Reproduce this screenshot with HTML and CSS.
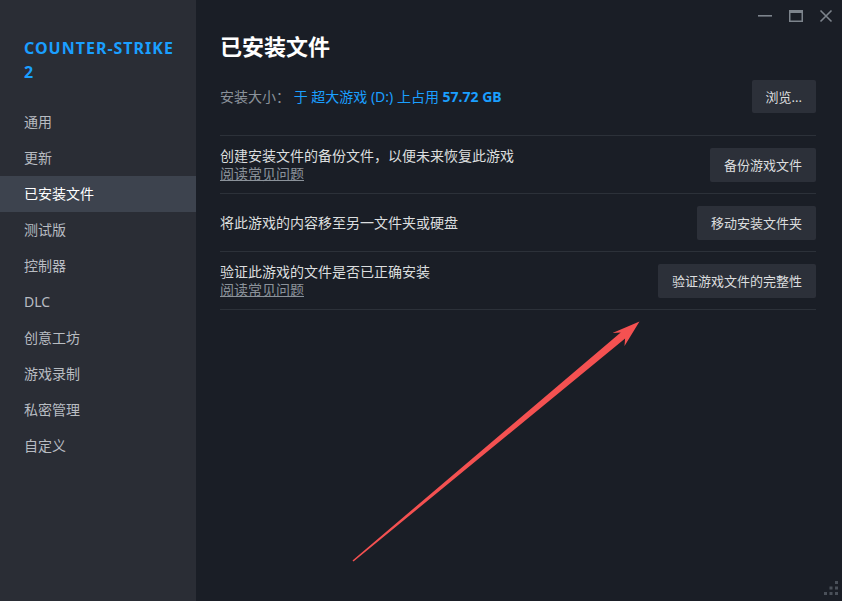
FILE: index.html
```html
<!DOCTYPE html>
<html lang="zh-CN">
<head>
<meta charset="utf-8">
<title>已安装文件</title>
<link rel="stylesheet" href="styles.css">
</head>
<body>
<div class="app">
  <aside class="sidebar">
    <div class="game-title">COUNTER-STRIKE 2</div>
    <nav class="nav">
      <div class="nav-item">通用</div>
      <div class="nav-item">更新</div>
      <div class="nav-item active">已安装文件</div>
      <div class="nav-item">测试版</div>
      <div class="nav-item">控制器</div>
      <div class="nav-item">DLC</div>
      <div class="nav-item">创意工坊</div>
      <div class="nav-item">游戏录制</div>
      <div class="nav-item">私密管理</div>
      <div class="nav-item">自定义</div>
    </nav>
  </aside>
  <main class="main">
    <div class="win-controls">
      <svg class="wc" width="16" height="14" viewBox="0 0 16 14"><rect x="1" y="6" width="14" height="1.6" fill="#7d848c"/></svg>
      <svg class="wc" width="16" height="14" viewBox="0 0 16 14"><rect x="1.75" y="1.75" width="12.5" height="10.5" fill="none" stroke="#7d848c" stroke-width="1.5"/><rect x="1" y="1" width="14" height="3" fill="#7d848c"/></svg>
      <svg class="wc" width="14" height="14" viewBox="0 0 14 14"><path d="M1.5 1.5 L12.5 12.5 M12.5 1.5 L1.5 12.5" stroke="#7d848c" stroke-width="1.6"/></svg>
    </div>
    <h1 class="page-title">已安装文件</h1>
    <div class="size-row">
      <div class="size-text"><span class="size-label">安装大小：</span> <span class="size-value">于 超大游戏 (D:) 上占用 <b>57.72 GB</b></span></div>
      <button class="btn">浏览...</button>
    </div>
    <div class="action-list">
      <div class="action-row">
        <div class="action-text">
          <div class="action-desc">创建安装文件的备份文件，以便未来恢复此游戏</div>
          <a class="faq">阅读常见问题</a>
        </div>
        <button class="btn">备份游戏文件</button>
      </div>
      <div class="action-row">
        <div class="action-text">
          <div class="action-desc">将此游戏的内容移至另一文件夹或硬盘</div>
        </div>
        <button class="btn">移动安装文件夹</button>
      </div>
      <div class="action-row">
        <div class="action-text">
          <div class="action-desc">验证此游戏的文件是否已正确安装</div>
          <a class="faq">阅读常见问题</a>
        </div>
        <button class="btn">验证游戏文件的完整性</button>
      </div>
    </div>
    <svg class="grip" width="16" height="16" viewBox="0 0 16 16">
      <rect x="12" y="1" width="3" height="3" fill="#4a5059"/>
      <rect x="6.5" y="6.5" width="3" height="3" fill="#4a5059"/>
      <rect x="12" y="6.5" width="3" height="3" fill="#4a5059"/>
      <rect x="1" y="12" width="3" height="3" fill="#4a5059"/>
      <rect x="6.5" y="12" width="3" height="3" fill="#4a5059"/>
      <rect x="12" y="12" width="3" height="3" fill="#4a5059"/>
    </svg>
  </main>
  <svg class="annotation" width="842" height="601" viewBox="0 0 842 601">
    <polygon points="639.5,321.5 624.5,346 625.1,338.4 353.5,561.6 352.5,560.4 620.7,332.6 612.5,333" fill="#f45151"/>
  </svg>
</div>
</body>
</html>
```
FILE: styles.css
```css
* { box-sizing: border-box; }
html, body { margin: 0; padding: 0; }
body {
  width: 842px;
  height: 601px;
  overflow: hidden;
  background: #1a1e26;
  font-family: "Noto Sans", "Noto Sans CJK SC", sans-serif;
  font-size: 14px;
  color: #dcdedf;
}
.app {
  position: relative;
  display: flex;
  width: 842px;
  height: 601px;
}
.sidebar {
  width: 196px;
  flex: none;
  background: #2a2d35;
  padding-top: 36px;
}
.game-title {
  padding: 0 22px 0 24px;
  color: #1a9fff;
  font-weight: 700;
  font-size: 16px;
  line-height: 24px;
  letter-spacing: 1px;
  margin-bottom: 20px;
}
.nav { display: flex; flex-direction: column; }
.nav-item {
  height: 36px;
  line-height: 36px;
  padding-left: 24px;
  color: #b8bcc2;
  font-size: 14px;
}
.nav-item.active {
  background: #3d434e;
  color: #ffffff;
}
.main {
  position: relative;
  flex: 1;
  background: #1a1e26;
  padding: 31px 26px 0 24px;
}
.win-controls {
  position: absolute;
  top: 9px;
  right: 9px;
  display: flex;
  gap: 15px;
  align-items: center;
}
.wc { display: block; }
.page-title {
  margin: 0;
  font-size: 22px;
  line-height: 30px;
  font-weight: 700;
  color: #ffffff;
}
.size-row {
  display: flex;
  align-items: center;
  justify-content: space-between;
  margin-top: 19px;
  padding-bottom: 22px;
}
.size-text { font-size: 14px; line-height: 20px; }
.size-label { color: #8b929a; }
.size-value { color: #1a9fff; }
.size-value b { font-weight: 700; }
.btn {
  font-family: "Noto Sans", "Noto Sans CJK SC", sans-serif;
  font-size: 13px;
  line-height: 18px;
  height: 34px;
  padding: 0 14px;
  border: none;
  border-radius: 2px;
  background: #2c3039;
  color: #dcdedf;
}
.size-row .btn { height: 33px; }
.action-list { border-bottom: 1px solid #2c3139; }
.action-row {
  display: flex;
  align-items: center;
  justify-content: space-between;
  border-top: 1px solid #2c3139;
  height: 58px;
}
.action-text { line-height: 18px; }
.action-desc { color: #dcdedf; font-size: 14px; }
.faq {
  display: inline-block;
  color: #8b929a;
  text-decoration: underline;
  font-size: 14px;
}
.grip {
  position: absolute;
  right: 3px;
  bottom: 5px;
}
.annotation {
  position: absolute;
  left: 0;
  top: 0;
  pointer-events: none;
}
```
